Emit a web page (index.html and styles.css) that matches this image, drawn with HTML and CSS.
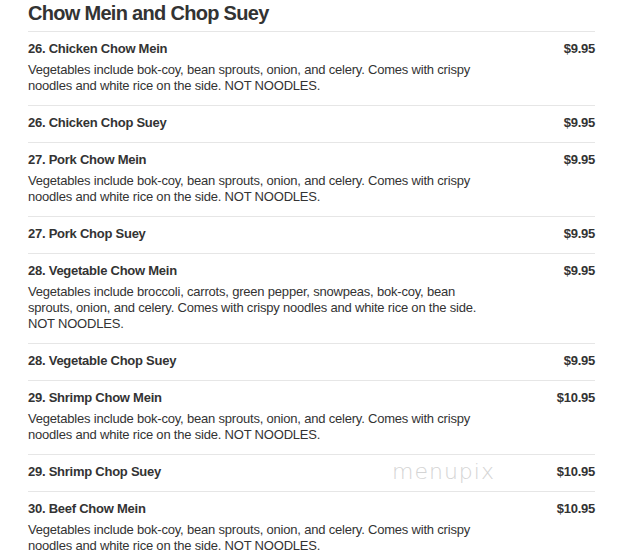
FILE: index.html
```html
<!DOCTYPE html>
<html>
<head>
<meta charset="utf-8">
<link rel="stylesheet" href="styles.css">
</head>
<body>
<div class="menu">
  <h2 class="section-title">Chow Mein and Chop Suey</h2>
  <div class="item">
    <div class="item-head"><span class="name">26. Chicken Chow Mein</span><span class="price">$9.95</span></div>
    <p class="desc">Vegetables include bok-coy, bean sprouts, onion, and celery. Comes with crispy noodles and white rice on the side. NOT NOODLES.</p>
  </div>
  <div class="item">
    <div class="item-head"><span class="name">26. Chicken Chop Suey</span><span class="price">$9.95</span></div>
  </div>
  <div class="item">
    <div class="item-head"><span class="name">27. Pork Chow Mein</span><span class="price">$9.95</span></div>
    <p class="desc">Vegetables include bok-coy, bean sprouts, onion, and celery. Comes with crispy noodles and white rice on the side. NOT NOODLES.</p>
  </div>
  <div class="item">
    <div class="item-head"><span class="name">27. Pork Chop Suey</span><span class="price">$9.95</span></div>
  </div>
  <div class="item">
    <div class="item-head"><span class="name">28. Vegetable Chow Mein</span><span class="price">$9.95</span></div>
    <p class="desc">Vegetables include broccoli, carrots, green pepper, snowpeas, bok-coy, bean sprouts, onion, and celery. Comes with crispy noodles and white rice on the side. NOT NOODLES.</p>
  </div>
  <div class="item">
    <div class="item-head"><span class="name">28. Vegetable Chop Suey</span><span class="price">$9.95</span></div>
  </div>
  <div class="item">
    <div class="item-head"><span class="name">29. Shrimp Chow Mein</span><span class="price">$10.95</span></div>
    <p class="desc">Vegetables include bok-coy, bean sprouts, onion, and celery. Comes with crispy noodles and white rice on the side. NOT NOODLES.</p>
  </div>
  <div class="item wm-host">
    <div class="item-head"><span class="name">29. Shrimp Chop Suey</span><span class="price">$10.95</span></div>
    <span class="watermark">menupix</span>
  </div>
  <div class="item">
    <div class="item-head"><span class="name">30. Beef Chow Mein</span><span class="price">$10.95</span></div>
    <p class="desc">Vegetables include bok-coy, bean sprouts, onion, and celery. Comes with crispy noodles and white rice on the side. NOT NOODLES.</p>
  </div>
</div>
</body>
</html>
```
FILE: styles.css
```css
html, body {
  margin: 0;
  padding: 0;
  background: #fff;
}
body {
  font-family: "Liberation Sans", Arial, sans-serif;
  color: #333;
}
.menu {
  width: 567px;
  margin-left: 28px;
}
.section-title {
  margin: 0;
  font-size: 20px;
  line-height: 24px;
  letter-spacing: -0.7px;
  font-weight: bold;
  padding-top: 1px;
  height: 31px;
  box-sizing: border-box;
  color: #333;
}
.item {
  border-top: 1px solid #e6e6e6;
  padding: 9px 0 11px;
}
.item-head {
  display: flex;
  justify-content: space-between;
  font-size: 13px;
  line-height: 16px;
  font-weight: bold;
  letter-spacing: -0.25px;
}
.desc {
  margin: 5px 0 0;
  font-size: 13px;
  line-height: 16px;
  letter-spacing: -0.2px;
  max-width: 460px;
}
.wm-host {
  position: relative;
}
.watermark {
  position: absolute;
  left: 364px;
  top: 4px;
  font-family: "DejaVu Sans", sans-serif;
  font-weight: 200;
  font-size: 22px;
  letter-spacing: 1px;
  color: #d4d4d4;
}
```
